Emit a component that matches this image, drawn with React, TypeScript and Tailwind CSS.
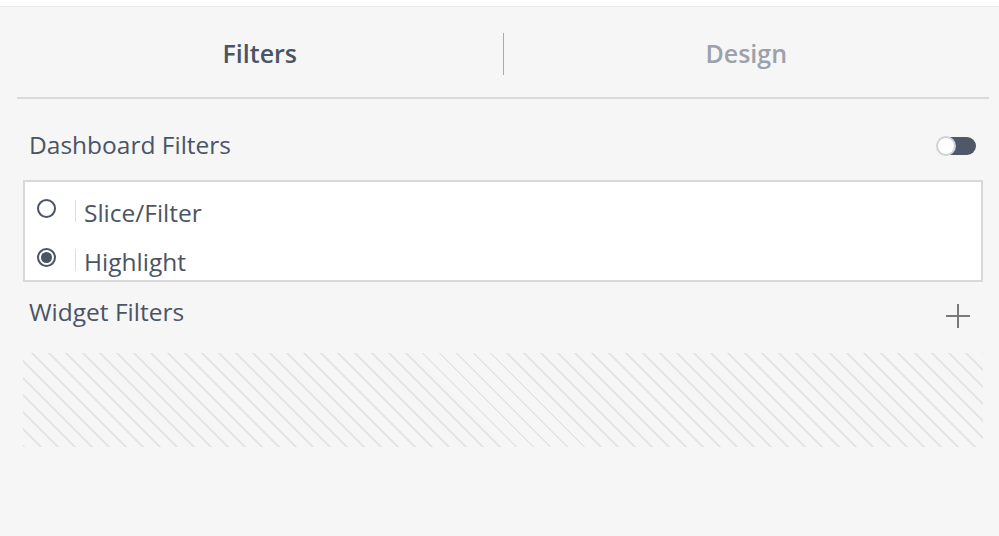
import React from "react";

export default function App() {
  const font = { fontFamily: '"Open Sans", "Noto Sans", sans-serif' };
  return (
    <div
      className="w-[999px] h-[536px] bg-[#f6f6f6] overflow-hidden flex flex-col"
      style={font}
    >
      <div className="h-[6px] bg-white border-b border-[#e9eaee] box-content" />
      <div className="ml-[17px] mr-[10px] h-[92px] pt-[4px] flex items-center border-b-2 border-[#d9d9d9]">
        <div className="flex-1 flex justify-center">
          <span className="text-[25px] font-semibold text-[#4b5465]">Filters</span>
        </div>
        <div className="w-px h-[42px] bg-[#a9a9a9]" />
        <div className="flex-1 flex justify-center">
          <span className="text-[25px] font-semibold text-[#9ca1ab]">Design</span>
        </div>
      </div>
      <div className="ml-[23px] mr-[16px] flex flex-col">
        <div className="h-[81px] pt-[12px] flex items-center justify-between pl-[6px] pr-[7px]">
          <span className="text-[24.5px] text-[#4b5465]">Dashboard Filters</span>
          <div className="relative w-[40px] h-[18px]">
            <div className="absolute right-0 top-0 w-[34px] h-[18px] rounded-full bg-[#4f5869]" />
            <div className="absolute left-0 top-[-1px] w-[20px] h-[20px] rounded-full bg-white border-2 border-[#cfd1d6]" />
          </div>
        </div>
        <div className="h-[102px] bg-white border-2 border-[#d8d8d8] flex flex-col pt-[11px]">
          <div className="h-[49px] shrink-0 flex items-start">
            <div className="w-[42px] flex justify-center pl-[1px] pt-[6px]">
              <div className="w-[19px] h-[19px] rounded-full border-2 border-[#4b5465]" />
            </div>
            <div className="w-px h-[22px] bg-[#dedede] mt-[7px] ml-[8px]" />
            <span className="ml-[8px] text-[24.5px] text-[#4b5465] leading-[40px]">Slice/Filter</span>
          </div>
          <div className="h-[38px] shrink-0 flex items-start">
            <div className="w-[42px] flex justify-center pl-[1px] pt-[6px]">
              <div className="w-[19px] h-[19px] rounded-full border-2 border-[#4b5465] flex items-center justify-center">
                <div className="w-[11px] h-[11px] rounded-full bg-[#4b5465]" />
              </div>
            </div>
            <div className="w-px h-[22px] bg-[#dedede] mt-[7px] ml-[8px]" />
            <span className="ml-[8px] text-[24.5px] text-[#4b5465] leading-[40px]">Highlight</span>
          </div>
        </div>
        <div className="h-[71px] flex items-start justify-between pl-[6px] pr-[12px]">
          <span className="text-[24.5px] text-[#4b5465] leading-[40px] mt-[10px]">Widget Filters</span>
          <svg width="26" height="26" viewBox="0 0 26 26" className="mt-[21px]">
            <path d="M13 1v24M1 13h24" stroke="#7a7a7a" strokeWidth="2" />
          </svg>
        </div>
        <div className="h-[94px] bg-[repeating-linear-gradient(45deg,#e5e5e5_0px,#e5e5e5_2px,transparent_2px,transparent_12px)]" />
      </div>
    </div>
  );
}
